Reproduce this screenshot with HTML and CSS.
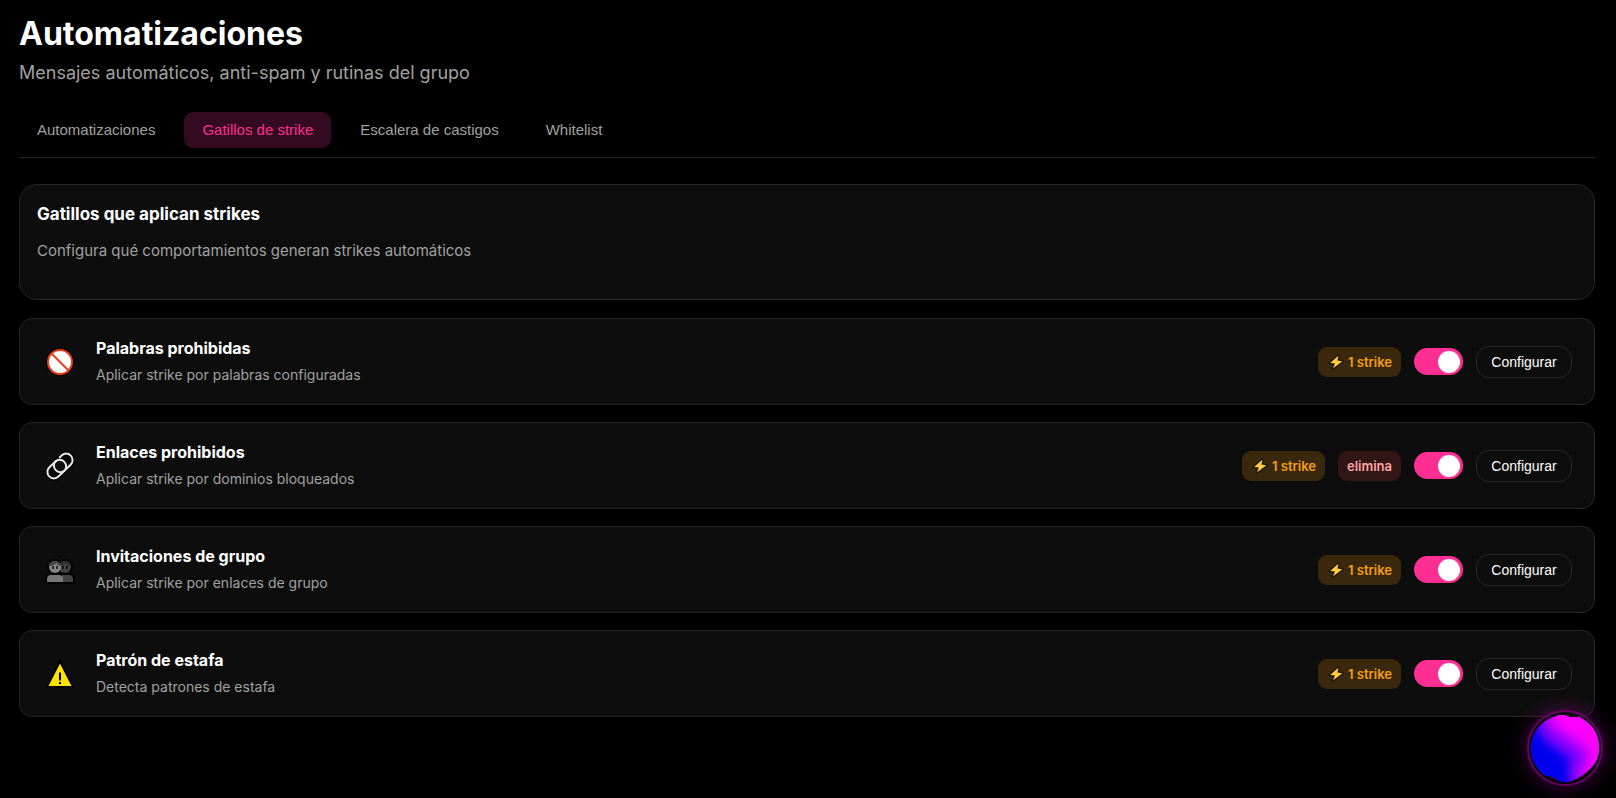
FILE: index.html
```html
<!DOCTYPE html>
<html lang="es">
<head>
<meta charset="utf-8">
<meta name="viewport" content="width=device-width, initial-scale=1">
<title>Automatizaciones</title>
<link rel="stylesheet" href="styles.css">
</head>
<body>
<svg class="defs" aria-hidden="true">
  <symbol id="bolt" viewBox="0 0 18 16">
    <path d="M11.500 1.500 3 9l4.800.6L6 14.500l9.500-7.300-5-.7z" fill="#ffc83d" stroke="#0a0a0a" stroke-width="2" stroke-linejoin="round" paint-order="stroke"/>
  </symbol>
</svg>
<main class="page">
  <header class="header">
    <h1 class="title">Automatizaciones</h1>
    <p class="subtitle">Mensajes automáticos, anti-spam y rutinas del grupo</p>
  </header>
  <nav class="tabs">
    <button class="tab" type="button">Automatizaciones</button>
    <button class="tab tab-active" type="button">Gatillos de strike</button>
    <button class="tab" type="button">Escalera de castigos</button>
    <button class="tab" type="button">Whitelist</button>
  </nav>
  <section class="intro">
    <h2 class="intro-title">Gatillos que aplican strikes</h2>
    <p class="intro-text">Configura qué comportamientos generan strikes automáticos</p>
  </section>
  <section class="list">
    <article class="row">
      <svg class="icon" viewBox="0 0 32 32" aria-hidden="true">
        <circle cx="16" cy="16" r="14.5" fill="#000"/>
        <circle cx="16" cy="16" r="12" fill="#fff" stroke="#f03a17" stroke-width="2"/>
        <path d="M7.5 7.5l17 17" stroke="#f03a17" stroke-width="2"/>
      </svg>
      <div class="info"><h3 class="name" id="t1">Palabras prohibidas</h3><p class="desc">Aplicar strike por palabras configuradas</p></div>
      <div class="actions">
        <span class="badge badge-strike"><svg class="bolt"><use href="#bolt"/></svg>1 strike</span>
        <input class="switch" type="checkbox" role="switch" aria-labelledby="t1" checked>
        <button class="config" type="button">Configurar</button>
      </div>
    </article>
    <article class="row">
      <svg class="icon" viewBox="0 0 32 32" aria-hidden="true">
        <g fill="none" transform="rotate(-44 16 16)">
          <g fill="#000" stroke="#000" stroke-width="5"><rect x="1" y="9.500" width="21" height="13" rx="6.500"/><rect x="10" y="9.500" width="21" height="13" rx="6.500"/></g>
          <circle cx="16" cy="16" r="6" fill="#0d0d0d"/>
          <rect x="10" y="9.500" width="21" height="13" rx="6.500" stroke="#e6e6e6" stroke-width="2"/>
          <path d="M17 8.500h4" stroke="#000" stroke-width="4"/>
          <rect x="1" y="9.500" width="21" height="13" rx="6.500" stroke="#e6e6e6" stroke-width="2"/>
        </g>
      </svg>
      <div class="info"><h3 class="name" id="t2">Enlaces prohibidos</h3><p class="desc">Aplicar strike por dominios bloqueados</p></div>
      <div class="actions">
        <span class="badge badge-strike"><svg class="bolt"><use href="#bolt"/></svg>1 strike</span>
        <span class="badge badge-delete">elimina</span>
        <input class="switch" type="checkbox" role="switch" aria-labelledby="t2" checked>
        <button class="config" type="button">Configurar</button>
      </div>
    </article>
    <article class="row">
      <svg class="icon" viewBox="0 -2 32 32" aria-hidden="true">
        <g stroke="#000" stroke-width="4" stroke-linejoin="round"><circle cx="11" cy="11" r="6"/><circle cx="21" cy="11" r="6"/><path d="M3 26v-3a4 4 0 0 1 4-4h18a4 4 0 0 1 4 4v3z"/></g>
        <circle cx="21" cy="11" r="6" fill="#444"/><path d="M15 10q1-5 6-5t6 5q-4 0-6-2-2 2-6 2z" fill="#303030"/>
        <path d="M18 26v-7h7a4 4 0 0 1 4 4v3z" fill="#444"/>
        <circle cx="11" cy="11" r="6" fill="#858585"/><path d="M5 10q1-5 6-5t6 5q-4 0-4-3-3 3-8 3z" fill="#484848"/>
        <path d="M3 26v-3a4 4 0 0 1 4-4h8a4 4 0 0 1 4 4v3z" fill="#777"/>
        <path d="M9 10v3M13 10v3M19 10v3M23 10v3" stroke="#000" stroke-width="1.300"/>
      </svg>
      <div class="info"><h3 class="name" id="t3">Invitaciones de grupo</h3><p class="desc">Aplicar strike por enlaces de grupo</p></div>
      <div class="actions">
        <span class="badge badge-strike"><svg class="bolt"><use href="#bolt"/></svg>1 strike</span>
        <input class="switch" type="checkbox" role="switch" aria-labelledby="t3" checked>
        <button class="config" type="button">Configurar</button>
      </div>
    </article>
    <article class="row">
      <svg class="icon" viewBox="0 -2 32 32" aria-hidden="true">
        <path d="M16 3.500 27.500 26h-23z" fill="#ffe100" stroke="#000" stroke-width="4" paint-order="stroke"/>
        <path d="M16 12.500v8M16 22v2" stroke="#000" stroke-width="2"/>
      </svg>
      <div class="info"><h3 class="name" id="t4">Patrón de estafa</h3><p class="desc">Detecta patrones de estafa</p></div>
      <div class="actions">
        <span class="badge badge-strike"><svg class="bolt"><use href="#bolt"/></svg>1 strike</span>
        <input class="switch" type="checkbox" role="switch" aria-labelledby="t4" checked>
        <button class="config" type="button">Configurar</button>
      </div>
    </article>
  </section>
</main>
<button class="orb" type="button" aria-label="Asistente">
  <svg class="orb-art" viewBox="0 0 74 74" aria-hidden="true">
    <defs>
      <clipPath id="blob"><path d="M28 4Q34 2 39 4T51 5Q72 15 72 37 72 48 66 55 58 64 50 68 43 72 36 72 32 72 28 69T16 65Q2 54 2 37 3 12 28 4z"/></clipPath>
      <filter id="soft" x="-50%" y="-50%" width="200%" height="200%"><feGaussianBlur stdDeviation="7"/></filter>
    </defs>
    <circle cx="37" cy="37" r="35" fill="#160c18"/>
    <g clip-path="url(#blob)">
      <path d="M0 0h74v74H0z" fill="#6a00ff"/>
      <g filter="url(#soft)">
        <path d="M-20 6 12 12 22 32 42 46 46 60 42 94H-20z" fill="#00e"/>
        <path d="M10-20h84V90H58L52 58 62 44 44 30 22 16z" fill="#f0f"/>
      </g>
    </g>
  </svg>
</button>
</body>
</html>
```
FILE: styles.css
```css
* { box-sizing: border-box; }
body {
  margin: 0;
  min-height: 100vh;
  background: #000;
  color: #fff;
  font-family: Inter, "Liberation Sans", sans-serif;
}
h1, h2, h3, p { margin: 0; }
button { font-family: "Liberation Sans", Arial, sans-serif; cursor: pointer; }
.defs { position: absolute; width: 0; height: 0; }
.page { padding: 14px 21px 40px 19px; }
.title { font-size: 32px; line-height: 40px; font-weight: 700; }
.subtitle { margin-top: 6px; font-size: 18px; line-height: 26px; color: #a1a1a1; }
.tabs {
  display: flex;
  gap: 11px;
  margin-top: 26px;
  padding-bottom: 9px;
  border-bottom: 1px solid #262626;
}
.tab {
  height: 36px;
  padding: 0 18px 2px;
  border: 0;
  border-radius: 9px;
  background: none;
  color: #a1a1a1;
  font-size: 15px;
}
.tab-active { background: #330a20; color: #ff2e93; }
.intro {
  margin-top: 26px;
  padding: 17px 17px 36px;
  border: 1px solid #262626;
  border-radius: 18px;
  background: #0d0d0d;
}
.intro-title { font-size: 17px; line-height: 24px; font-weight: 700; }
.intro-text { margin-top: 13px; font-size: 15px; line-height: 24px; color: #a1a1a1; }
.list { display: grid; gap: 17px; margin-top: 18px; }
.row {
  display: flex;
  align-items: center;
  gap: 20px;
  min-height: 87px;
  padding: 16px 22px 16px 24px;
  border: 1px solid #262626;
  border-radius: 13px;
  background: #0d0d0d;
}
.icon { width: 32px; height: 32px; flex: none; }
.info { flex: 1; padding-bottom: 2px; }
.name { font-size: 16px; line-height: 24px; font-weight: 700; }
.desc { margin-top: 4px; font-size: 14px; line-height: 22px; color: #a1a1a1; }
.actions { display: flex; align-items: center; gap: 13px; }
.badge {
  display: flex;
  align-items: center;
  gap: 3px;
  height: 30px;
  padding: 0 9px;
  border-radius: 9px;
  font-size: 13px;
  font-weight: 600;
}
.badge-strike { background: #3a280d; color: #f59e0b; }
.badge-delete { background: #321616; color: #fca5a5; }
.bolt { width: 18px; height: 16px; }
.switch {
  appearance: none;
  display: flex;
  align-items: center;
  justify-content: flex-end;
  width: 49px;
  height: 27px;
  margin: 0;
  padding: 0 3px;
  border-radius: 14px;
  background: #ff2e93;
  cursor: pointer;
}
.switch:not(:checked) { justify-content: flex-start; background: #333; }
.switch::before { content: ""; width: 22px; height: 22px; border-radius: 50%; background: #fff; }
.config {
  min-width: 96px;
  height: 32px;
  padding: 0 14px;
  border: 1px solid #262626;
  border-radius: 13px;
  background: none;
  color: #fff;
  font-size: 14px;
}
.orb {
  position: fixed;
  right: 13px;
  bottom: 12px;
  width: 76px;
  height: 76px;
  padding: 0;
  border: 2px solid #6c0069;
  border-radius: 50%;
  background: none;
  box-shadow: 0 0 20px rgba(255, 0, 255, 0.3);
}
.orb-art { display: block; width: 100%; height: 100%; }
```
